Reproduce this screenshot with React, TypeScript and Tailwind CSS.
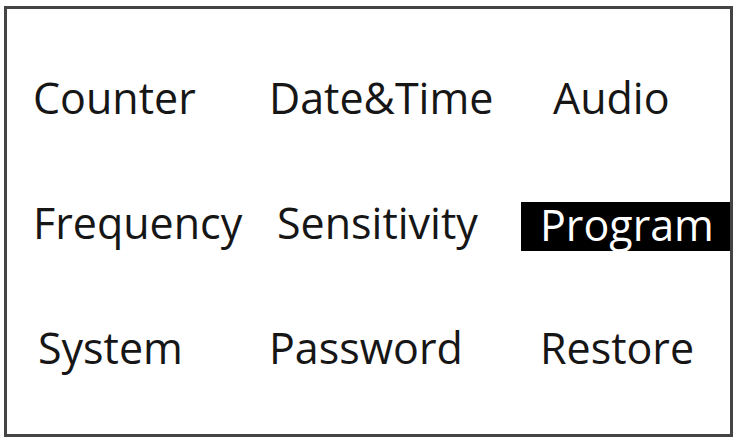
import React from 'react';

type Item = {
  label: string;
  pad: string;
  active?: boolean;
};

// menu entries, row by row; pad nudges each label inside its column
const rows: Item[][] = [
  [
    { label: 'Counter', pad: 'pl-[26px]' },
    { label: 'Date&Time', pad: 'pl-[4px]' },
    { label: 'Audio', pad: 'pl-[32px]' },
  ],
  [
    { label: 'Frequency', pad: 'pl-[26px]' },
    { label: 'Sensitivity', pad: 'pl-[12px]' },
    { label: 'Program', pad: 'pl-0', active: true },
  ],
  [
    { label: 'System', pad: 'pl-[31px]' },
    { label: 'Password', pad: 'pl-[4px]' },
    { label: 'Restore', pad: 'pl-[19px]' },
  ],
];

const MenuCell: React.FC<{ item: Item }> = ({ item }) => {
  if (item.active) {
    return (
      <div className="mt-[4px] h-[49px] bg-black pl-[19px] leading-[46px] text-white">
        {item.label}
      </div>
    );
  }
  return <div className={`${item.pad} leading-[50px] text-[#161616]`}>{item.label}</div>;
};

const App: React.FC = () => {
  return (
    <div className="h-[440px] w-[737px] bg-white pl-[4px] pt-[6px]">
      <div
        className="flex h-[431px] w-[729px] flex-col border-[3px] border-[#444444] pt-[64px] text-[43px]"
        style={{ fontFamily: '"Open Sans", "Noto Sans", sans-serif' }}
      >
        {rows.map((row, i) => (
          <div key={i} className="grid h-[125px] shrink-0 grid-cols-[258px_256px_1fr] items-start">
            {row.map((item) => (
              <MenuCell key={item.label} item={item} />
            ))}
          </div>
        ))}
      </div>
    </div>
  );
};

export default App;
